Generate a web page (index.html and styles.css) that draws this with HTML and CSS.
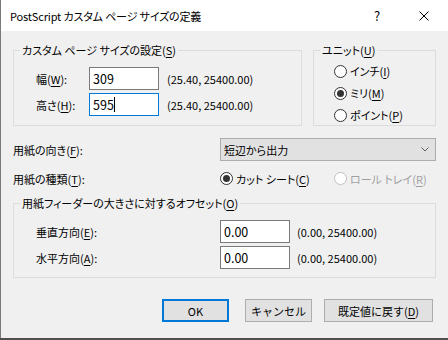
FILE: index.html
```html
<!DOCTYPE html>
<html lang="ja">

<head>
    <meta charset="UTF-8">
    <title>PostScript カスタム ページ サイズの定義</title>
    <link rel="stylesheet" href="styles.css">
</head>

<body>
    <div class="window">
        <!-- Title bar -->
        <div class="titlebar">
            <span class="title">PostScript カスタム ページ サイズの定義</span>
            <span class="help">?</span>
            <span class="close">
                <svg width="10" height="10" viewBox="0 0 10 10">
                    <path d="M0.5 0.5 L9.5 9.5 M9.5 0.5 L0.5 9.5" stroke="#000" stroke-width="1" fill="none"/>
                </svg>
            </span>
        </div>

        <div class="client">
            <div class="top-row">
                <!-- Custom size -->
                <fieldset class="group size-group">
                    <legend>カスタム ページ サイズの設定(<u>S</u>)</legend>
                    <div class="size-grid">
                        <span class="field-label">幅(<u>W</u>):</span>
                        <div class="textbox">309</div>
                        <span class="range">(25.40, 25400.00)</span>

                        <span class="field-label">高さ(<u>H</u>):</span>
                        <div class="textbox focused">595<span class="caret"></span></div>
                        <span class="range">(25.40, 25400.00)</span>
                    </div>
                </fieldset>

                <!-- Units -->
                <fieldset class="group unit-group">
                    <legend>ユニット(<u>U</u>)</legend>
                    <div class="radio-list">
                        <div class="radio"><span class="radio-mark"></span>インチ(<u>I</u>)</div>
                        <div class="radio"><span class="radio-mark checked"></span>ミリ(<u>M</u>)</div>
                        <div class="radio"><span class="radio-mark"></span>ポイント(<u>P</u>)</div>
                    </div>
                </fieldset>
            </div>

            <!-- Paper direction -->
            <div class="option-row direction-row">
                <span class="option-label">用紙の向き(<u>F</u>):</span>
                <div class="combo">
                    <span>短辺から出力</span>
                    <svg width="8" height="5" viewBox="0 0 8 5">
                        <path d="M0.5 0.5 L4 4 L7.5 0.5" stroke="#606060" stroke-width="1" fill="none"/>
                    </svg>
                </div>
            </div>

            <!-- Paper type -->
            <div class="option-row type-row">
                <span class="option-label">用紙の種類(<u>T</u>):</span>
                <div class="radio cut-sheet"><span class="radio-mark checked"></span>カット シート(<u>C</u>)</div>
                <div class="radio disabled"><span class="radio-mark"></span>ロール トレイ(<u>R</u>)</div>
            </div>

            <!-- Offsets -->
            <fieldset class="group offset-group">
                <legend>用紙フィーダーの大きさに対するオフセット(<u>O</u>)</legend>
                <div class="offset-grid">
                    <span class="field-label">垂直方向(<u>E</u>):</span>
                    <div class="textbox">0.00</div>
                    <span class="range">(0.00, 25400.00)</span>

                    <span class="field-label">水平方向(<u>A</u>):</span>
                    <div class="textbox">0.00</div>
                    <span class="range">(0.00, 25400.00)</span>
                </div>
            </fieldset>

            <!-- Buttons -->
            <div class="buttons">
                <button class="btn btn-ok default">OK</button>
                <button class="btn btn-cancel">キャンセル</button>
                <button class="btn btn-reset">既定値に戻す(<u>D</u>)</button>
            </div>
        </div>
    </div>
</body>

</html>
```

FILE: styles.css
```css
body {
    margin: 0;
    padding: 0;
    background-color: #505050;
    font-family: "Noto Sans CJK JP", "Noto Sans", sans-serif;
    font-size: 11px;
    line-height: 16px;
    color: #000;
    font-feature-settings: "palt" 1;
}

.window {
    width: 447px;
    height: 338px;
    border-left: 1px solid #7a7a7a;
    background-color: #f0f0f0;
    display: flex;
    flex-direction: column;
}

u {
    text-underline-offset: 2px;
}

/* Title bar */
.titlebar {
    height: 31px;
    background-color: #fff;
    display: flex;
    align-items: center;
    padding-left: 9px;
}

.title {
    flex: 1;
    letter-spacing: -0.15px;
}

.help {
    font-size: 13px;
    width: 20px;
    margin-right: 32px;
    text-align: center;
}

.close {
    display: flex;
    width: 10px;
    margin-right: 19px;
}

/* Client area */
.client {
    flex: 1;
    padding: 11px 12px 0 12px;
    display: flex;
    flex-direction: column;
}

.group {
    margin: 0;
    padding: 0;
    min-width: 0;
    border: 1px solid #dcdcdc;
}

.group legend {
    margin-left: 6px;
    padding: 0 2px;
}

.top-row {
    display: flex;
    gap: 11px;
}

.size-group {
    width: 289px;
    box-sizing: border-box;
}

.unit-group {
    flex: 1;
}

.size-grid {
    display: grid;
    grid-template-columns: 53px 70px auto;
    row-gap: 3px;
    align-items: center;
    padding: 9px 0 9px 22px;
}

.size-grid .range {
    margin-left: 8px;
}

.offset-grid {
    display: grid;
    grid-template-columns: 184px 70px auto;
    row-gap: 3px;
    align-items: center;
    padding: 9px 0 8px 22px;
}

.offset-grid .range {
    margin-left: 7px;
}

.textbox {
    height: 23px;
    box-sizing: border-box;
    border: 1px solid #7a7a7a;
    background-color: #fff;
    padding-left: 3px;
    display: flex;
    align-items: center;
    font-size: 12.5px;
}

.textbox.focused {
    border-color: #0078d7;
}

.caret {
    width: 1px;
    height: 15px;
    background-color: #000;
}

/* Radio buttons */
.radio-list {
    display: flex;
    flex-direction: column;
    gap: 6px;
    padding: 5px 0 0 20px;
}

.radio {
    display: flex;
    align-items: center;
    height: 16px;
}

.radio-mark {
    width: 13px;
    height: 13px;
    box-sizing: border-box;
    border: 1px solid #333;
    border-radius: 50%;
    background-color: #fff;
    margin-right: 3px;
    display: flex;
    align-items: center;
    justify-content: center;
}

.radio-mark.checked::after {
    content: "";
    width: 7px;
    height: 7px;
    border-radius: 50%;
    background-color: #333;
}

.radio.disabled {
    color: #a0a0a0;
}

.radio.disabled .radio-mark {
    border-color: #c0c0c0;
}

/* Option rows */
.option-row {
    display: flex;
    align-items: center;
    height: 23px;
}

.direction-row {
    margin-top: 12px;
}

.type-row {
    margin-top: 6px;
}

.option-label {
    width: 207px;
}

.combo {
    width: 216px;
    height: 23px;
    box-sizing: border-box;
    background-color: #e1e1e1;
    border: 1px solid #adadad;
    padding: 0 6px 0 3px;
    display: flex;
    align-items: center;
    justify-content: space-between;
}

.cut-sheet {
    width: 114px;
}

.offset-group {
    margin-top: 5px;
}

/* Buttons */
.buttons {
    display: flex;
    justify-content: flex-end;
    margin-top: 21px;
    margin-right: 3px;
}

.btn {
    height: 23px;
    box-sizing: border-box;
    background-color: #e1e1e1;
    border: 1px solid #adadad;
    font-family: inherit;
    font-size: 11px;
    color: #000;
    padding: 0;
}

.btn.default {
    border: 2px solid #0078d7;
}

.btn-ok {
    width: 67px;
}

.btn-cancel {
    width: 67px;
    margin-left: 16px;
}

.btn-reset {
    width: 109px;
    margin-left: 12px;
}
```
